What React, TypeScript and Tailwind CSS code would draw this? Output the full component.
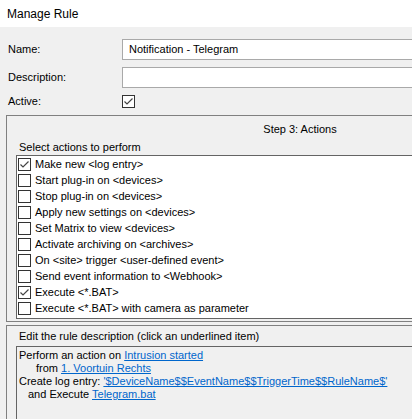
import React from "react";

const actions = [
  { label: "Make new <log entry>", checked: true },
  { label: "Start plug-in on <devices>", checked: false },
  { label: "Stop plug-in on <devices>", checked: false },
  { label: "Apply new settings on <devices>", checked: false },
  { label: "Set Matrix to view <devices>", checked: false },
  { label: "Activate archiving on <archives>", checked: false },
  { label: "On <site> trigger <user-defined event>", checked: false },
  { label: "Send event information to <Webhook>", checked: false },
  { label: "Execute <*.BAT>", checked: true },
  { label: "Execute <*.BAT> with camera as parameter", checked: false },
];

const CheckBox = ({ checked }: { checked: boolean }) => (
  <div className="w-[13px] h-[13px] border border-[#333333] bg-white flex items-center justify-center shrink-0">
    {checked && (
      <svg width="11" height="11" viewBox="0 0 11 11">
        <path d="M1.5 5.5 L4 8 L9.5 2.5" fill="none" stroke="#444444" strokeWidth="1.2" />
      </svg>
    )}
  </div>
);

const Link = ({ children }: { children: React.ReactNode }) => (
  <span className="text-[#0066cc] underline">{children}</span>
);

export default function App() {
  return (
    <div
      className="w-[412px] h-[419px] overflow-hidden bg-[#f0f0f0] text-[11px] text-black leading-none"
      style={{ fontFamily: '"Liberation Sans", Arial, sans-serif' }}
    >
      <div className="h-[27px] bg-white flex items-center px-[7px] text-[12px]">Manage Rule</div>

      <div className="pt-[12px] flex flex-col">
        <div className="flex items-center h-[21px]">
          <span className="w-[122px] pl-[8px]">Name:</span>
          <div className="flex-1 h-[21px] border border-[#a9a9a9] border-r-0 bg-white flex items-center pl-[6px]">
            Notification - Telegram
          </div>
        </div>
        <div className="flex items-center h-[21px] mt-[7px]">
          <span className="w-[122px] pl-[8px]">Description:</span>
          <div className="flex-1 h-[21px] border border-[#a9a9a9] border-r-0 bg-white" />
        </div>
        <div className="flex items-center h-[14px] mt-[6px]">
          <span className="w-[122px] pl-[8px]">Active:</span>
          <CheckBox checked />
        </div>

        <div className="mt-[7px] ml-[6px] w-[588px] h-[207px] border border-[#808080] flex flex-col">
          <div className="h-[26px] flex items-center justify-center">Step 3: Actions</div>
          <div className="h-[13px] pl-[12px]">Select actions to perform</div>
          <div className="ml-[9px] h-[164px] border border-[#646464] border-r-0 bg-white pl-[1px] flex flex-col">
            {actions.map((a) => (
              <div key={a.label} className="h-[16px] flex items-center gap-[4px]">
                <CheckBox checked={a.checked} />
                <span>{a.label}</span>
              </div>
            ))}
          </div>
        </div>

        <div className="mt-[3px] ml-[6px] w-[588px] h-[120px] border border-[#808080] flex flex-col">
          <div className="h-[20px] flex items-center pl-[12px]">Edit the rule description (click an underlined item)</div>
          <div className="ml-[9px] flex-1 border-l border-t border-[#646464] px-[2px] pt-[2px] leading-[13px]">
            <div>
              Perform an action on <Link>Intrusion started</Link>
            </div>
            <div className="pl-[17px]">
              from <Link>1. Voortuin Rechts</Link>
            </div>
            <div>
              Create log entry: <Link>'$DeviceName$$EventName$$TriggerTime$$RuleName$'</Link>
            </div>
            <div className="pl-[9px]">
              and Execute <Link>Telegram.bat</Link>
            </div>
          </div>
        </div>
      </div>
    </div>
  );
}
